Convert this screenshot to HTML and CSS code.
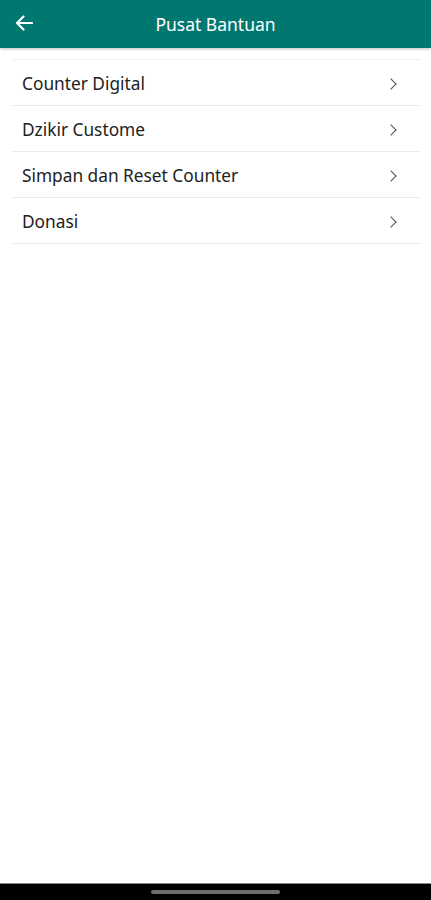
FILE: index.html
```html
<!DOCTYPE html>
<html lang="id">
<head>
    <meta charset="UTF-8">
    <title>Pusat Bantuan</title>
    <link rel="stylesheet" href="styles.css">
</head>
<body>
    <div class="screen">
        <div class="appbar">
            <span class="back">
                <svg width="18" height="16" viewBox="0 0 18 16">
                    <path d="M17 8H2M8.5 1.5L2 8l6.5 6.5" fill="none" stroke="#fff" stroke-width="2.2" stroke-linecap="round" stroke-linejoin="round"/>
                </svg>
            </span>
            <h1>Pusat Bantuan</h1>
        </div>

        <ul class="help-list">
            <li><span>Counter Digital</span><i class="chev"></i></li>
            <li><span>Dzikir Custome</span><i class="chev"></i></li>
            <li><span>Simpan dan Reset Counter</span><i class="chev"></i></li>
            <li><span>Donasi</span><i class="chev"></i></li>
        </ul>

        <div class="spacer"></div>

        <div class="navbar"><div class="handle"></div></div>
    </div>
</body>
</html>
```

FILE: styles.css
```css
body {
    margin: 0;
    font-family: "Noto Sans", "Open Sans", sans-serif;
    background: #fff;
}
.screen {
    width: 431px;
    height: 900px;
    display: flex;
    flex-direction: column;
}
.appbar {
    height: 48px;
    background: #00776f;
    display: flex;
    align-items: center;
    position: relative;
    box-shadow: 0 1px 3px rgba(0,0,0,0.25);
}
.back {
    position: absolute;
    left: 15px;
    top: 15px;
    display: flex;
}
.appbar h1 {
    flex: 1;
    margin: 0;
    text-align: center;
    color: #fff;
    font-size: 17.5px;
    font-weight: 400;
}
.help-list {
    list-style: none;
    margin: 11px 10px 0 12px;
    padding: 0;
    border-top: 1px solid #f0f0f0;
}
.help-list li {
    height: 45px;
    border-bottom: 1px solid #ececec;
    display: flex;
    align-items: center;
    justify-content: space-between;
    padding: 2px 26px 0 10px;
    box-sizing: border-box;
    height: 46px;
    color: #222;
    font-size: 17.3px;
}
.chev {
    width: 7px;
    height: 7px;
    border-right: 1.8px solid #4f4f4f;
    border-top: 1.8px solid #4f4f4f;
    transform: rotate(45deg);
}
.spacer {
    flex: 1;
}
.navbar {
    height: 16px;
    background: #000;
    border-top: 1px solid #8a8a8a;
    display: flex;
    justify-content: center;
    align-items: center;
}
.handle {
    width: 129px;
    height: 4px;
    border-radius: 2px;
    background: #6e6e6e;
}
```
